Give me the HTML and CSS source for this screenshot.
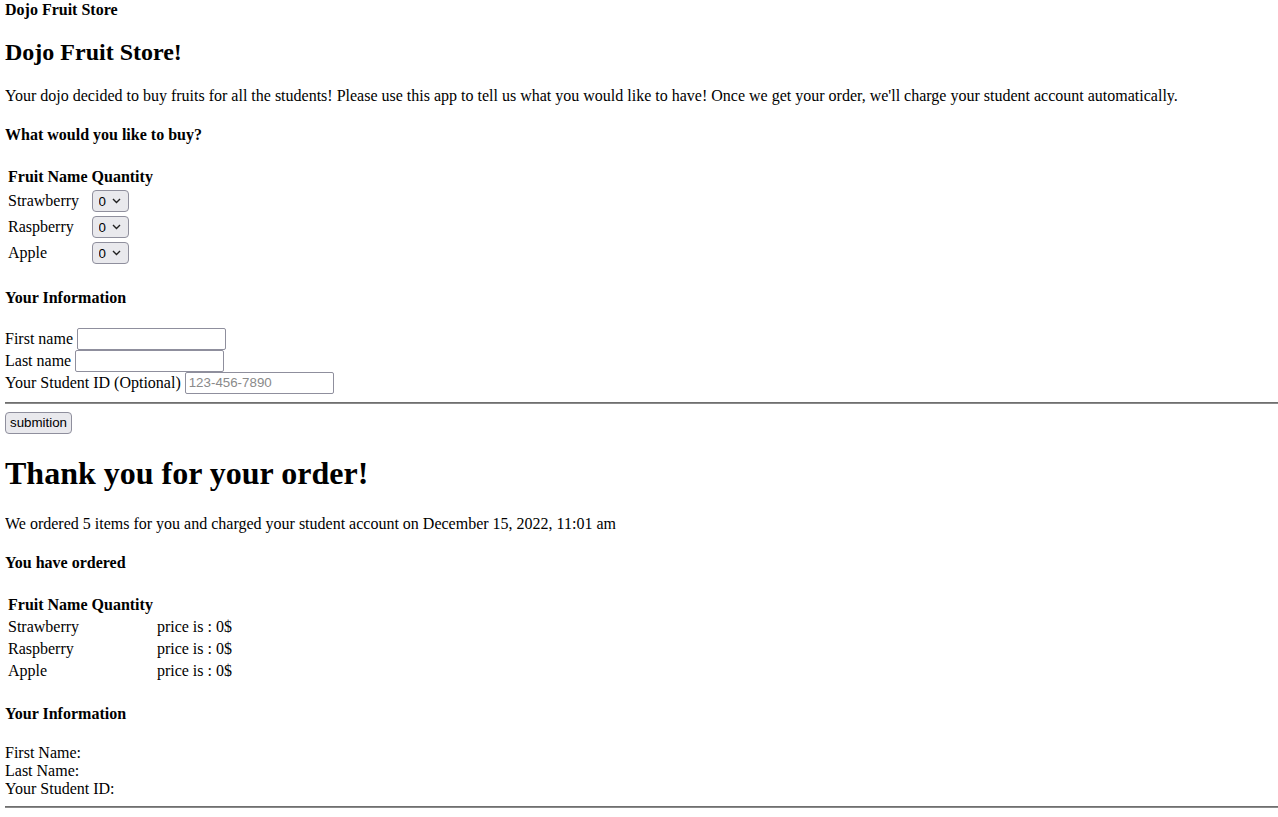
FILE: index.html
```html
<!DOCTYPE html>
<html>
<head>
<meta charset="utf-8">
<title>Dojo Fruit Store</title>
<link rel="stylesheet" href="styles.css">
</head>
<body>
<div class="brand">Dojo Fruit Store</div>
<h2>Dojo Fruit Store!</h2>
<p>Your dojo decided to buy fruits for all the students! Please use this app to tell us what you would like to have! Once we get your order, we'll charge your student account automatically.</p>
<h4>What would you like to buy?</h4>
<table class="order-table">
  <tr><th>Fruit Name</th><th>Quantity</th></tr>
  <tr><td>Strawberry</td><td><span class="select-wrap"><select class="qty"><option>0</option><option>1</option><option>2</option></select><svg class="chev" width="9" height="6" viewBox="0 0 9 6"><path d="M1 1 L4.5 4.5 L8 1" fill="none" stroke="#222" stroke-width="1.4"/></svg></span></td></tr>
  <tr><td>Raspberry</td><td><span class="select-wrap"><select class="qty"><option>0</option><option>1</option><option>2</option></select><svg class="chev" width="9" height="6" viewBox="0 0 9 6"><path d="M1 1 L4.5 4.5 L8 1" fill="none" stroke="#222" stroke-width="1.4"/></svg></span></td></tr>
  <tr><td>Apple</td><td><span class="select-wrap"><select class="qty"><option>0</option><option>1</option><option>2</option></select><svg class="chev" width="9" height="6" viewBox="0 0 9 6"><path d="M1 1 L4.5 4.5 L8 1" fill="none" stroke="#222" stroke-width="1.4"/></svg></span></td></tr>
</table>
<h4>Your Information</h4>
<form class="info-form">
  <div class="form-line">First name <input class="field" type="text"></div>
  <div class="form-line">Last name <input class="field" type="text"></div>
  <div class="form-line">Your Student ID (Optional) <input class="field" type="text" placeholder="123-456-7890"></div>
</form>
<hr class="rule">
<button class="submit-btn" type="button">submition</button>
<h1>Thank you for your order!</h1>
<p>We ordered 5 items for you and charged your student account on December 15, 2022, 11:01 am</p>
<h4>You have ordered</h4>
<table class="summary-table">
  <tr><th>Fruit Name</th><th>Quantity</th></tr>
  <tr><td>Strawberry</td><td></td><td>price is : 0$</td></tr>
  <tr><td>Raspberry</td><td></td><td>price is : 0$</td></tr>
  <tr><td>Apple</td><td></td><td>price is : 0$</td></tr>
</table>
<h4>Your Information</h4>
<div class="info-lines">
  <div>First Name:</div>
  <div>Last Name:</div>
  <div>Your Student ID:</div>
</div>
<hr class="rule">
</body>
</html>
```

FILE: styles.css
```css
html, body {
  background: #fff;
}
body {
  margin: 1px 0 0 5px;
  font-family: "Liberation Serif", "Times New Roman", serif;
  font-size: 16px;
  line-height: 18px;
  color: #000;
}
.brand {
  font-weight: bold;
}
h1 {
  font-size: 32px;
  line-height: 37px;
  margin: 21.44px 0;
}
h2 {
  font-size: 24px;
  line-height: 27px;
  margin: 19.92px 0;
}
h4 {
  font-size: 16px;
  margin: 21.28px 0;
}
p {
  margin: 16px 0;
  line-height: 19px;
}
table {
  border-spacing: 2px;
}
th, td {
  padding: 1px;
  text-align: left;
}
th {
  font-weight: bold;
}
.order-table td {
  height: 22px;
}
.select-wrap {
  position: relative;
  display: inline-block;
  vertical-align: middle;
}
.qty {
  appearance: none;
  -webkit-appearance: none;
  box-sizing: border-box;
  width: 37px;
  height: 22px;
  margin: 0;
  padding: 0 0 0 6px;
  font-family: "Liberation Sans", Arial, sans-serif;
  font-size: 13.33px;
  color: #000;
  background: #e9e9ed;
  border: 1px solid #8f8f9d;
  border-radius: 4px;
  display: block;
}
.chev {
  position: absolute;
  right: 8px;
  top: 8px;
  pointer-events: none;
}
.info-form {
  margin: 0;
}
.form-line {
  height: 22px;
  line-height: 22px;
  display: flex;
  align-items: center;
  gap: 4px;
}
.field {
  box-sizing: border-box;
  width: 149px;
  height: 22px;
  margin: 0;
  padding: 0 3px;
  font-family: "Liberation Sans", Arial, sans-serif;
  font-size: 13.33px;
  border: 1px solid #8f8f9d;
  border-radius: 2px;
  background: #fff;
}
.field::placeholder {
  color: #8a8a8a;
}
.rule {
  margin: 8px 0;
  border: 0;
  border-top: 1px solid #6f6f6f;
  border-bottom: 1px solid #8a8a8a;
  height: 0;
}
.submit-btn {
  box-sizing: border-box;
  height: 22px;
  width: 67px;
  margin: 1px 0 0 0;
  padding: 0;
  font-family: "Liberation Sans", Arial, sans-serif;
  font-size: 13.33px;
  color: #000;
  background: #e9e9ed;
  border: 1px solid #8f8f9d;
  border-radius: 4px;
  display: block;
}
```
